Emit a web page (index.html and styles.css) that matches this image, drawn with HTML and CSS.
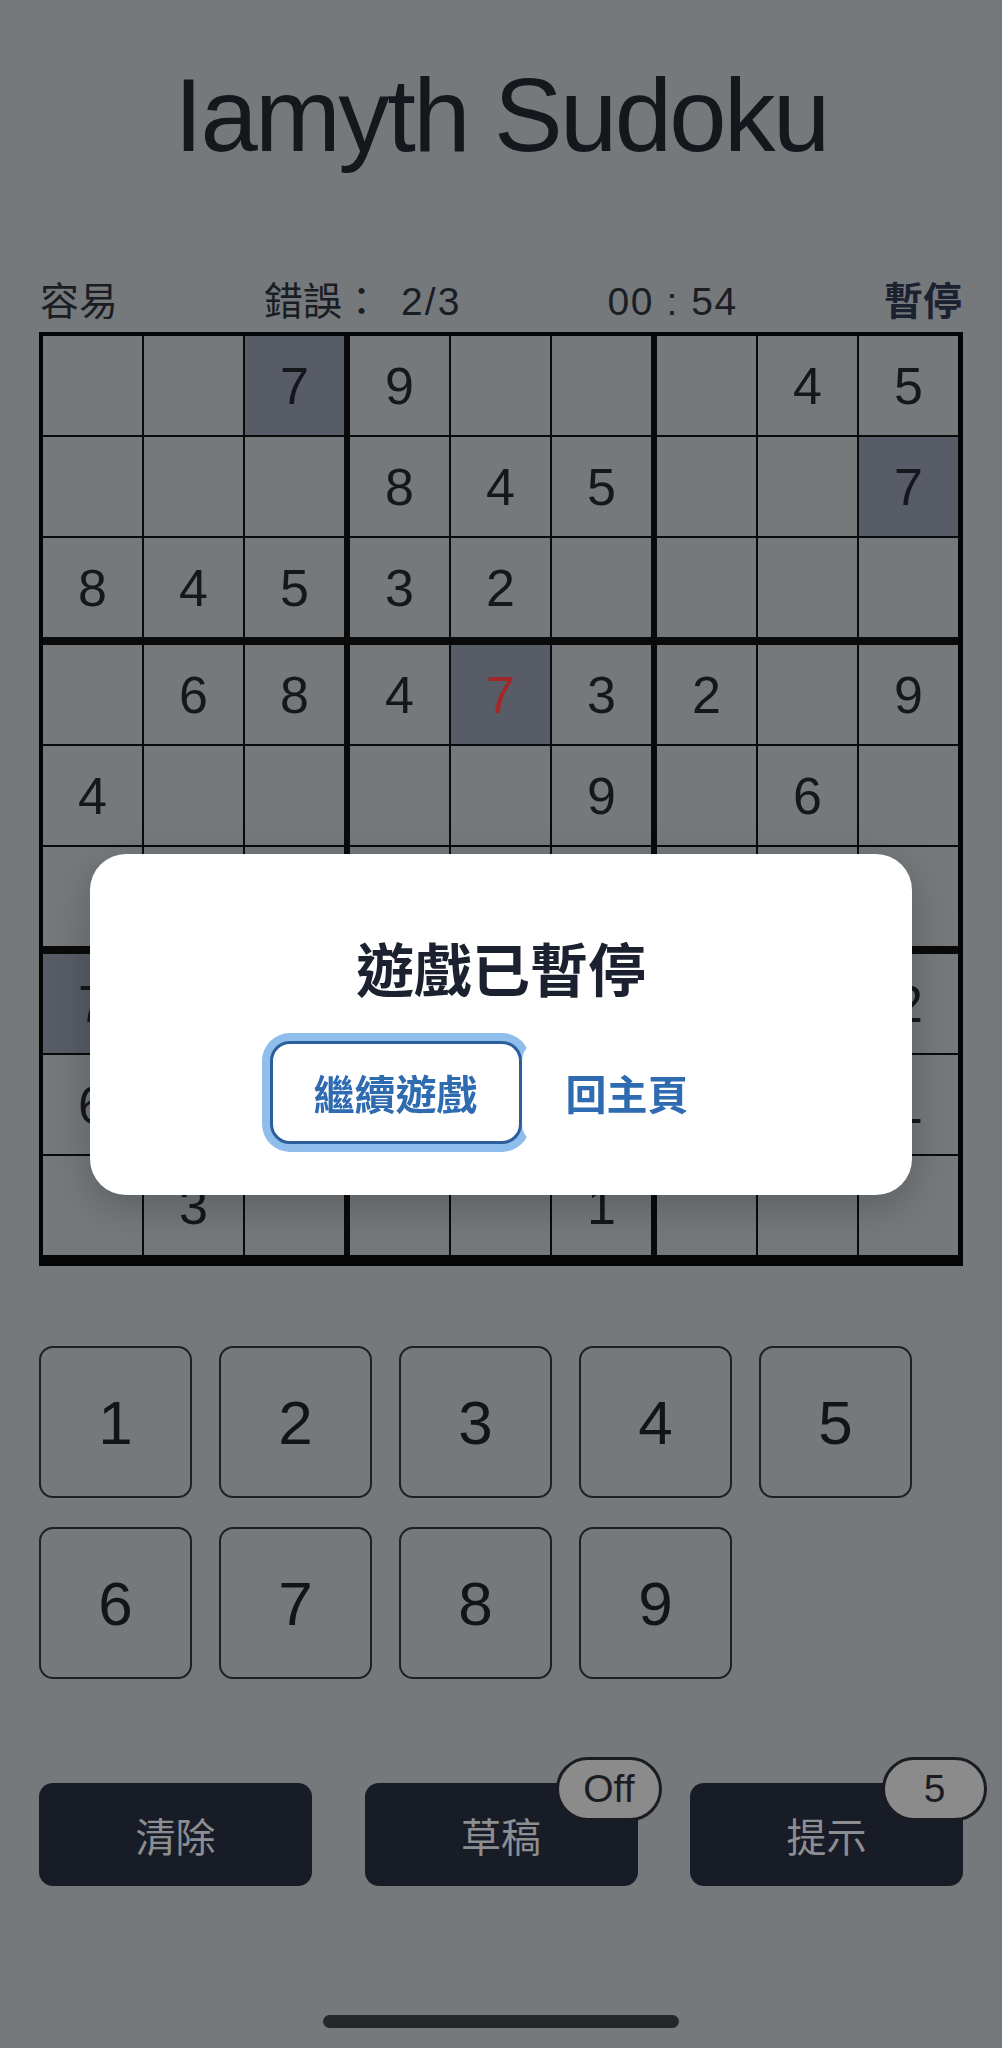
FILE: index.html
```html
<!DOCTYPE html>
<html lang="zh-Hant">
<head>
<meta charset="utf-8">
<title>Iamyth Sudoku</title>
<link rel="stylesheet" href="styles.css">
</head>
<body>
<div class="app">
  <h1 class="title">Iamyth Sudoku</h1>
  <div class="status">
    <span class="level">容易</span>
    <span class="mistakes">錯誤：<span class="count">2/3</span></span>
    <span class="timer">00 : 54</span>
    <span class="pause">暫停</span>
  </div>
  <div class="board">
    <div class="cell"></div><div class="cell"></div><div class="cell c3 hl">7</div><div class="cell">9</div><div class="cell"></div><div class="cell c6"></div><div class="cell"></div><div class="cell">4</div><div class="cell c9">5</div>
    <div class="cell"></div><div class="cell"></div><div class="cell c3"></div><div class="cell">8</div><div class="cell">4</div><div class="cell c6">5</div><div class="cell"></div><div class="cell"></div><div class="cell c9 hl">7</div>
    <div class="cell r3">8</div><div class="cell r3">4</div><div class="cell c3 r3">5</div><div class="cell r3">3</div><div class="cell r3">2</div><div class="cell c6 r3"></div><div class="cell r3"></div><div class="cell r3"></div><div class="cell c9 r3"></div>
    <div class="cell"></div><div class="cell">6</div><div class="cell c3">8</div><div class="cell">4</div><div class="cell hl err">7</div><div class="cell c6">3</div><div class="cell">2</div><div class="cell"></div><div class="cell c9">9</div>
    <div class="cell">4</div><div class="cell"></div><div class="cell c3"></div><div class="cell"></div><div class="cell"></div><div class="cell c6">9</div><div class="cell"></div><div class="cell">6</div><div class="cell c9"></div>
    <div class="cell r3"></div><div class="cell r3"></div><div class="cell c3 r3"></div><div class="cell r3"></div><div class="cell r3"></div><div class="cell c6 r3"></div><div class="cell r3"></div><div class="cell r3"></div><div class="cell c9 r3"></div>
    <div class="cell hl">7</div><div class="cell"></div><div class="cell c3"></div><div class="cell"></div><div class="cell"></div><div class="cell c6"></div><div class="cell"></div><div class="cell"></div><div class="cell c9">2</div>
    <div class="cell">6</div><div class="cell"></div><div class="cell c3"></div><div class="cell"></div><div class="cell"></div><div class="cell c6"></div><div class="cell"></div><div class="cell"></div><div class="cell c9">1</div>
    <div class="cell r9"></div><div class="cell r9">3</div><div class="cell c3 r9"></div><div class="cell r9"></div><div class="cell r9"></div><div class="cell c6 r9">1</div><div class="cell r9"></div><div class="cell r9"></div><div class="cell c9 r9"></div>
  </div>
  <div class="numpad">
    <button class="num">1</button><button class="num">2</button><button class="num">3</button><button class="num">4</button><button class="num">5</button>
    <button class="num">6</button><button class="num">7</button><button class="num">8</button><button class="num">9</button>
  </div>
  <div class="actions">
    <button class="action">清除</button>
    <button class="action">草稿<span class="badge">Off</span></button>
    <button class="action">提示<span class="badge">5</span></button>
  </div>
  <div class="home-indicator"></div>
</div>
<div class="overlay">
  <div class="modal">
    <h2 class="modal-title">遊戲已暫停</h2>
    <div class="modal-actions">
      <button class="btn btn-primary">繼續遊戲</button>
      <button class="btn btn-link">回主頁</button>
    </div>
  </div>
</div>
</body>
</html>
```

FILE: styles.css
```css
* { box-sizing: border-box; }
html, body {
  margin: 0;
  padding: 0;
}
body {
  width: 1002px;
  height: 2048px;
  overflow: hidden;
  background: #75797c;
  font-family: "Liberation Sans", "Noto Sans CJK TC", sans-serif;
  color: #15171c;
}
.app {
  height: 2048px;
  padding: 0 39px;
  display: flex;
  flex-direction: column;
}
.title {
  margin: 64px 0 0;
  font-size: 103px;
  line-height: 103px;
  font-weight: 400;
  text-align: center;
  letter-spacing: -2.6px;
  color: #15171c;
}
.status {
  margin-top: 111px;
  height: 47px;
  display: flex;
  justify-content: space-between;
  padding: 0 1px;
  font-size: 39px;
  line-height: 47px;
  color: #1a1d24;
}
.count {
  margin-left: 20px;
  letter-spacing: 2px;
}
.timer { letter-spacing: 1.6px; }
.pause { font-weight: 700; color: #1c2130; }
.board {
  margin-top: 7px;
  width: max-content;
  display: grid;
  grid-template-columns: repeat(9, auto);
  border: 4px solid #050505;
  border-right-width: 5px;
  border-bottom-width: 11px;
}
.cell {
  box-sizing: content-box;
  width: 99px;
  height: 99px;
  border-right: 2px solid #0a0a0a;
  border-bottom: 2px solid #0a0a0a;
  display: flex;
  align-items: center;
  justify-content: center;
  font-size: 52px;
  color: #15171c;
}
.cell.c3, .cell.c6 { border-right-width: 6px; }
.cell.c9 { border-right: 0; }
.cell.r3 { border-bottom-width: 8px; }
.cell.r9 { border-bottom: 0; }
.cell.hl { background: #575c66; }
.cell.err { color: #a3282a; }

.numpad {
  margin-top: 80px;
  display: flex;
  flex-wrap: wrap;
  gap: 29px 27px;
}
.num {
  width: 153px;
  height: 152px;
  border: 2px solid #1d2027;
  border-radius: 14px;
  background: transparent;
  font-family: "Liberation Sans", sans-serif;
  font-size: 62px;
  color: #121419;
  padding: 0;
}
.actions {
  margin-top: 104px;
  display: flex;
  justify-content: space-between;
}
.action {
  position: relative;
  width: 273px;
  height: 103px;
  border: 0;
  border-radius: 14px;
  background: #181c27;
  color: #8c8e91;
  font-family: "Liberation Sans", "Noto Sans CJK TC", sans-serif;
  font-size: 40px;
  padding: 0;
}
.badge {
  position: absolute;
  top: -26px;
  right: -24px;
  min-width: 105px;
  height: 64px;
  padding: 0 24px;
  border: 3px solid #1a1c22;
  border-radius: 32px;
  background: #8b8b8b;
  color: #1a1c22;
  font-size: 39px;
  line-height: 58px;
  text-align: center;
}
.home-indicator {
  margin: 129px auto 0;
  width: 356px;
  height: 13px;
  border-radius: 7px;
  background: #262729;
}

.overlay {
  position: fixed;
  inset: 0;
  display: flex;
  align-items: center;
  justify-content: center;
}
.modal {
  width: 822px;
  height: 341px;
  border-radius: 36px;
  background: #ffffff;
  box-shadow: 0 12px 40px rgba(0, 0, 0, 0.22);
  padding-top: 83px;
  display: flex;
  flex-direction: column;
  align-items: center;
}
.modal-title {
  margin: 0;
  font-size: 58px;
  line-height: 70px;
  font-weight: 700;
  color: #1c2130;
}
.modal-actions {
  margin-top: 34px;
  display: flex;
  justify-content: center;
}
.btn {
  height: 103px;
  padding: 0 41px;
  border: 3px solid transparent;
  border-radius: 20px;
  background: #ffffff;
  font-family: "Noto Sans CJK TC", sans-serif;
  font-size: 41px;
  font-weight: 700;
  color: #2e6bb0;
}
.btn-primary {
  border-color: #2b5f9c;
  box-shadow: 0 0 0 8px #8fbdec;
}
```
